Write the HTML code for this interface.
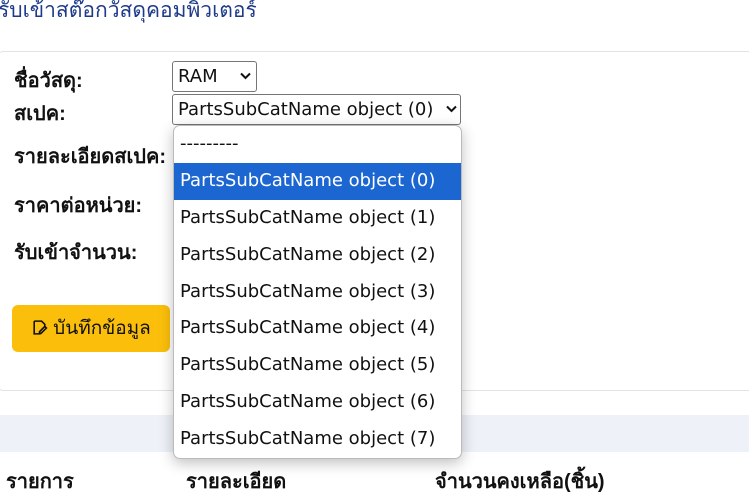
<!DOCTYPE html>
<html><head><meta charset="utf-8"><style>
body{margin:0;width:749px;height:497px;overflow:hidden;background:#fff;font-family:"Liberation Sans","Noto Sans CJK SC",sans-serif;position:relative;color:#111}
.a{position:absolute;white-space:nowrap}
.title{left:-2px;top:-6px;font-size:21px;color:#1e3a8a}
.card{position:absolute;left:-2px;top:51px;width:760px;height:338px;border:1px solid #e3e3e3;border-radius:5px}
.lbl{font-weight:bold;font-size:20px;left:14px}
.sel{position:absolute;border:1px solid #767676;border-radius:3px;background:#fff;font-size:18px;box-sizing:border-box;padding-left:5px;font-family:"DejaVu Sans",sans-serif}
.sel svg{position:absolute;right:5px;top:10px}
.btn{left:12px;top:305px;width:158px;height:47px;background:#fbbf0b;border-radius:6px;font-size:19px;line-height:47px;box-sizing:border-box;text-align:center}
.band{position:absolute;left:0;top:415px;width:749px;height:37px;background:#eef1f8}
.th{font-weight:bold;font-size:20px;top:465px}
.dd{position:absolute;left:173px;top:125px;width:287px;height:332px;background:#fff;border:1px solid #bbb;border-radius:7px;box-shadow:0 4px 14px rgba(0,0,0,.25);overflow:hidden;font-family:"DejaVu Sans",sans-serif}
.it{height:36.9px;line-height:36.9px;font-size:18px;padding-left:6px;color:#111}
.hl{background:#1c66d1;color:#fff}
</style></head><body>
<div class="a title">รับเข้าสต๊อกวัสดุคอมพิวเตอร์</div>
<div class="card"></div>
<div class="a lbl" style="top:64px">ชื่อวัสดุ:</div>
<div class="a lbl" style="top:97px">สเปค:</div>
<div class="a lbl" style="top:140px">รายละเอียดสเปค:</div>
<div class="a lbl" style="top:189px">ราคาต่อหน่วย:</div>
<div class="a lbl" style="top:236px">รับเข้าจำนวน:</div>
<div class="sel" style="left:172px;top:61px;width:85px;height:31px;line-height:29px">RAM<svg width="11" height="8" viewBox="0 0 11 8"><path d="M1 1.5l4.5 4.5 4.5-4.5" fill="none" stroke="#111" stroke-width="2"/></svg></div>
<div class="sel" style="left:172px;top:94px;width:289px;height:31px;line-height:29px">PartsSubCatName object (0)<svg width="11" height="8" viewBox="0 0 11 8" style="right:3px"><path d="M1 1.5l4.5 4.5 4.5-4.5" fill="none" stroke="#111" stroke-width="2"/></svg></div>
<div class="a btn"><svg width="17" height="17" viewBox="0 0 16 16" style="vertical-align:-2px;margin-right:5px"><path d="M3 2h7l3 3v3M3 2v12h6M8 12l5-5 1.5 1.5-5 5H8z" fill="none" stroke="#111" stroke-width="1.5"/></svg>บันทึกข้อมูล</div>
<div class="band"></div>
<div class="a th" style="left:6px">รายการ</div>
<div class="a th" style="left:186px">รายละเอียด</div>
<div class="a th" style="left:435px">จำนวนคงเหลือ(ชิ้น)</div>
<div class="dd">
<div class="it">---------</div>
<div class="it hl">PartsSubCatName object (0)</div>
<div class="it">PartsSubCatName object (1)</div>
<div class="it">PartsSubCatName object (2)</div>
<div class="it">PartsSubCatName object (3)</div>
<div class="it">PartsSubCatName object (4)</div>
<div class="it">PartsSubCatName object (5)</div>
<div class="it">PartsSubCatName object (6)</div>
<div class="it">PartsSubCatName object (7)</div>
</div>
</body></html>
